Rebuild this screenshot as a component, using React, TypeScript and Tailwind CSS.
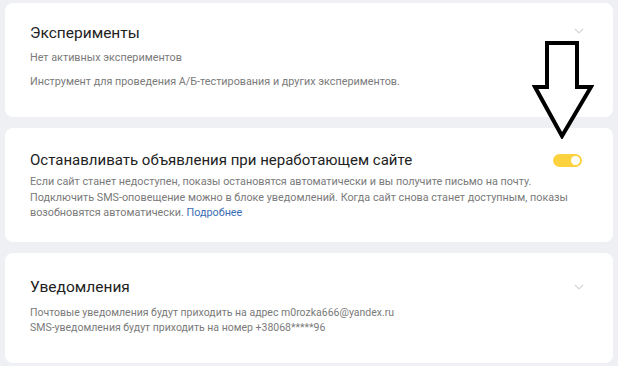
import React from 'react';

// Small chevron used on collapsed sections
function Chevron() {
  return (
    <svg width="10" height="6" viewBox="0 0 10 6" className="shrink-0">
      <path d="M1 1l4 4 4-4" fill="none" stroke="#d4d6da" strokeWidth="1.2" />
    </svg>
  );
}

function Toggle() {
  return (
    <div className="relative h-[13px] w-[29px] shrink-0 rounded-full bg-[#fcd33f]">
      <div className="absolute right-[2px] top-[2px] h-[9px] w-[9px] rounded-full bg-white" />
    </div>
  );
}

// The hand-drawn arrow over the page
function BigArrow() {
  return (
    <svg
      className="absolute left-[532px] top-[41px]"
      width="62"
      height="98"
      viewBox="0 0 62 98"
    >
      <path
        d="M15 2h30v44h14L30 95 3 46h12z"
        fill="white"
        stroke="black"
        strokeWidth="4"
        strokeLinejoin="miter"
      />
    </svg>
  );
}

export default function App() {
  return (
    <div
      className="relative h-[366px] w-[618px] overflow-hidden bg-[#eef0f4] px-[5px] pt-[3px]"
      style={{ fontFamily: 'Roboto, Arial, sans-serif' }}
    >
      {/* Experiments */}
      <div className="h-[114px] rounded-[8px] bg-white pl-[25px] pr-[29px] pt-[20px]">
        <div className="flex items-center justify-between">
          <h2 className="text-[15.5px] leading-[20px] text-[#222]">Эксперименты</h2>
          <div className="-mt-[4px]">
            <Chevron />
          </div>
        </div>
        <p className="mt-[8px] text-[10.8px] leading-[14px] text-[#7a7a7a]">
          Нет активных экспериментов
        </p>
        <p className="mt-[10px] text-[10.8px] leading-[14px] text-[#7a7a7a]">
          Инструмент для проведения А/Б-тестирования и других экспериментов.
        </p>
      </div>

      {/* Stop ads when site is down */}
      <div className="mt-[11px] h-[114px] rounded-[8px] bg-white pl-[25px] pr-[31px] pt-[22px]">
        <div className="flex items-center justify-between">
          <h2 className="text-[15px] leading-[20px] text-[#222]">
            Останавливать объявления при неработающем сайте
          </h2>
          <Toggle />
        </div>
        <p className="mt-[4px] whitespace-nowrap text-[10.8px] leading-[15.5px] text-[#7a7a7a]">
          Если сайт станет недоступен, показы остановятся автоматически и вы получите письмо на почту.
          <br />
          Подключить SMS-оповещение можно в блоке уведомлений. Когда сайт снова станет доступным, показы
          <br />
          возобновятся автоматически. <span className="text-[#3b6db3]">Подробнее</span>
        </p>
      </div>

      {/* Notifications */}
      <div className="mt-[11px] h-[110px] rounded-[8px] bg-white pl-[25px] pr-[29px] pt-[24px]">
        <div className="flex items-center justify-between">
          <h2 className="text-[15.5px] leading-[20px] text-[#222]">Уведомления</h2>
          <Chevron />
        </div>
        <p className="mt-[9px] text-[10.5px] leading-[14.5px] text-[#7a7a7a]">
          Почтовые уведомления будут приходить на адрес m0rozka666@yandex.ru
          <br />
          SMS-уведомления будут приходить на номер +38068*****96
        </p>
      </div>

      <BigArrow />
    </div>
  );
}
